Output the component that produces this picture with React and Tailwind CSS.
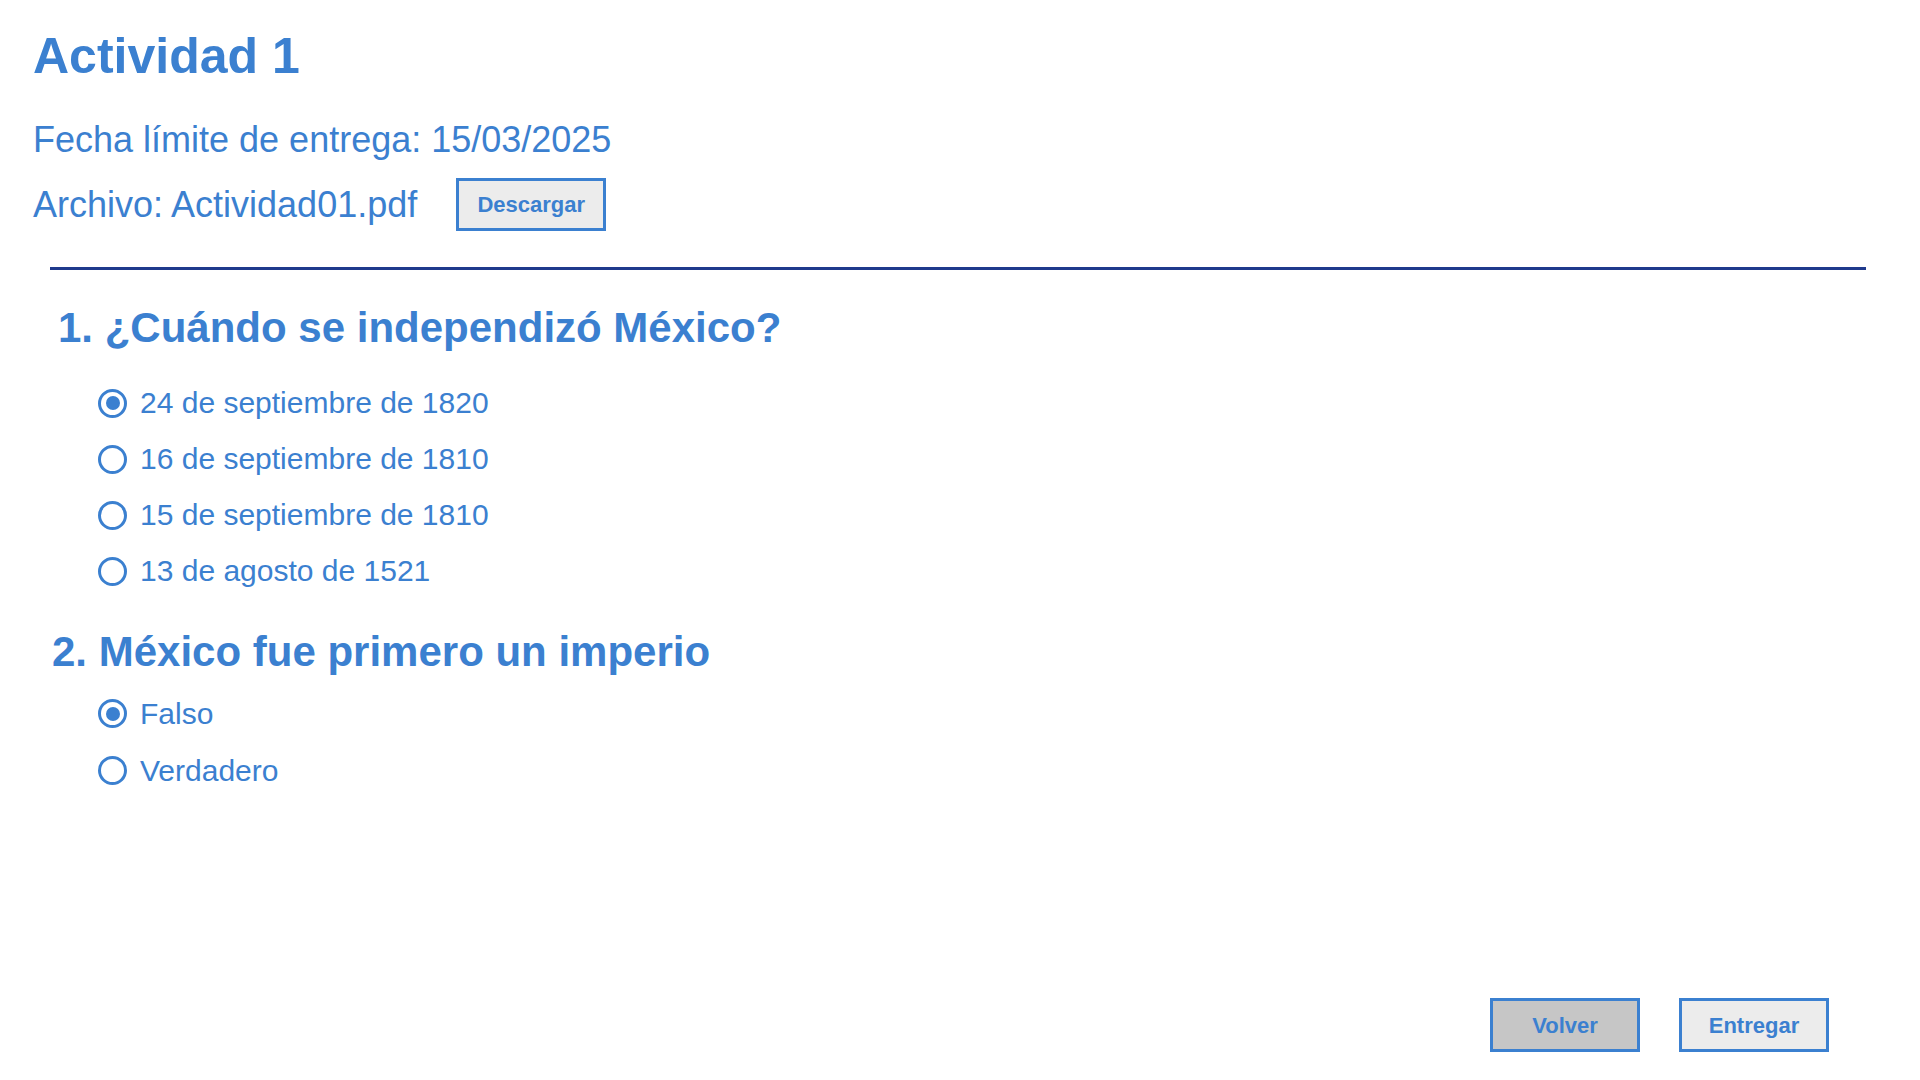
const preguntas = [
    {
        titulo: "1. ¿Cuándo se independizó México?",
        opciones: ["24 de septiembre de 1820", "16 de septiembre de 1810", "15 de septiembre de 1810", "13 de agosto de 1521"],
        seleccion: 0,
    },
    {
        titulo: "2. México fue primero un imperio",
        opciones: ["Falso", "Verdadero"],
        seleccion: 0,
    },
];

const Radio = ({ checked }) => (
    <span className="flex items-center justify-center w-[29px] h-[29px] rounded-full border-[3px] border-[#3b80d0] shrink-0">
        {checked && <span className="w-[14px] h-[14px] rounded-full bg-[#3b80d0]" />}
    </span>
);

const App = () => {
    return (
        <div className="h-screen flex flex-col bg-white text-[#3b80d0] font-['Liberation_Sans',Arial,sans-serif]">
            {/* encabezado */}
            <header className="pl-[33px] pt-[31px]">
                <h1 className="text-[50px] font-bold leading-none">Actividad 1</h1>
                <p className="text-[36px] leading-none mt-[41px]">Fecha límite de entrega: 15/03/2025</p>
                <div className="flex items-center mt-[20px]">
                    <span className="text-[36px] leading-none">Archivo: Actividad01.pdf</span>
                    <button className="ml-[39px] w-[150px] h-[53px] border-[3px] border-[#3b80d0] bg-[#ececec] text-[22px] font-bold text-[#3b80d0]">
                        Descargar
                    </button>
                </div>
            </header>

            <hr className="mt-[36px] ml-[50px] w-[1816px] border-0 h-[3px] bg-[#1f3a8c]" />

            {/* preguntas */}
            <section className="pl-[52px]">
                <div className="mt-[37px]">
                    <h2 className="pl-[6px] text-[42px] font-bold leading-none">{preguntas[0].titulo}</h2>
                    <ul className="mt-[26px] pl-[46px]">
                        {preguntas[0].opciones.map((op, j) => (
                            <li key={j} className="flex items-center h-[56px] gap-[13px]">
                                <Radio checked={j === preguntas[0].seleccion} />
                                <span className="text-[30px] leading-none">{op}</span>
                            </li>
                        ))}
                    </ul>
                </div>
                <div className="mt-[32px]">
                    <h2 className="text-[42px] font-bold leading-none">{preguntas[1].titulo}</h2>
                    <ul className="mt-[12px] pl-[46px]">
                        {preguntas[1].opciones.map((op, j) => (
                            <li key={j} className="flex items-center h-[57px] gap-[13px]">
                                <Radio checked={j === preguntas[1].seleccion} />
                                <span className="text-[30px] leading-none">{op}</span>
                            </li>
                        ))}
                    </ul>
                </div>
            </section>

            {/* botones */}
            <div className="mt-auto flex justify-end gap-[39px] pr-[91px] pb-[28px]">
                <button className="w-[150px] h-[54px] border-[3px] border-[#3b80d0] bg-[#c6c6c6] text-[22px] font-bold text-[#3b80d0]">
                    Volver
                </button>
                <button className="w-[150px] h-[54px] border-[3px] border-[#3b80d0] bg-[#ececec] text-[22px] font-bold text-[#3b80d0]">
                    Entregar
                </button>
            </div>
        </div>
    );
};

export default App;
